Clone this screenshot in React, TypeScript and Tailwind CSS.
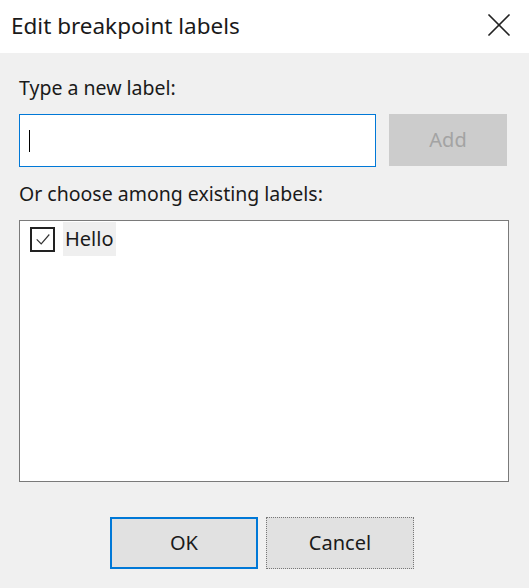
import { X } from "lucide-react";

export default function App() {
  return (
    <div className="w-[529px] h-[588px] bg-[#f0f0f0] flex flex-col font-['Noto_Sans',sans-serif] text-[#1a1a1a]">
      <div className="h-[53px] bg-white flex items-center justify-between pl-[11px] pr-[10px]">
        <span className="text-[22.5px] leading-none pb-[1px]">Edit breakpoint labels</span>
        <X className="size-[40px] text-[#222] mb-[3px]" strokeWidth={1.05} />
      </div>

      <div className="flex flex-col px-[19px] pt-[22px]">
        <label className="text-[19.5px] leading-[26px]">Type a new label:</label>
        <div className="mt-[13px] flex gap-[13px]">
          <div className="w-[357px] h-[53px] bg-white border border-[#0078d7] flex items-center pl-[9px]">
            <span className="w-px h-[22px] bg-black" />
          </div>
          <button className="w-[118px] h-[52px] bg-[#cccccc] text-[#a3a3a3] text-[20px]">Add</button>
        </div>
        <label className="mt-[14px] text-[19.5px] leading-[26px]">Or choose among existing labels:</label>
        <div className="mt-[13px] h-[262px] w-[490px] bg-white border border-[#7a7a7a] pt-[1px] pl-[10px]">
          <div className="flex items-center gap-[8px]">
            <span className="size-[25px] border-2 border-[#222] flex items-center justify-center">
              <svg viewBox="0 0 20 20" className="size-[18px]">
                <path d="M3 10.5 L8 15.5 L17 5" fill="none" stroke="#333" strokeWidth="1.3" />
              </svg>
            </span>
            <span className="bg-[#efefef] h-[34px] px-[2px] flex items-center text-[20px]">Hello</span>
          </div>
        </div>
        <div className="mt-[35px] flex justify-center gap-[8px] pr-[5px]">
          <button className="w-[148px] h-[52px] bg-[#e1e1e1] border-2 border-[#0078d7] text-[20px]">OK</button>
          <button className="w-[148px] h-[52px] bg-[#e1e1e1] border border-dotted border-[#777] text-[20px]">Cancel</button>
        </div>
      </div>
    </div>
  );
}
